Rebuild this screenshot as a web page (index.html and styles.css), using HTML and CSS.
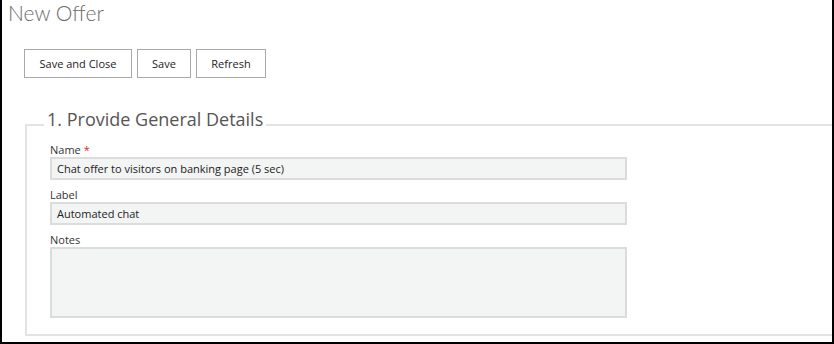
FILE: index.html
```html
<!DOCTYPE html>
<html lang="en">
<head>
    <meta charset="UTF-8">
    <title>New Offer</title>
    <link rel="stylesheet" href="styles.css">
</head>
<body>

<div class="page">
    <h1 class="page__title">New Offer</h1>

    <div class="toolbar">
        <button class="toolbar__btn toolbar__btn--wide">Save and Close</button>
        <button class="toolbar__btn toolbar__btn--small">Save</button>
        <button class="toolbar__btn">Refresh</button>
    </div>

    <fieldset class="section">
        <legend class="section__title">1. Provide General Details</legend>

        <div class="field">
            <label class="field__label">Name <span class="required">*</span></label>
            <div class="field__input">Chat offer to visitors on banking page (5 sec)</div>
        </div>
        <div class="field">
            <label class="field__label">Label</label>
            <div class="field__input">Automated chat</div>
        </div>
        <div class="field">
            <label class="field__label">Notes</label>
            <div class="field__input field__input--notes"></div>
        </div>
    </fieldset>
</div>

</body>
</html>
```

FILE: styles.css
```css
*{
    box-sizing: border-box;
    margin:0;
    padding:0;
}
body{
    font-family: "Open Sans", "Noto Sans", sans-serif;
    color:#333;
    background:#fff;
}
.page{
    width:834px;
    height:344px;
    border-left:2px solid #000;
    border-right:2px solid #000;
    border-bottom:2px solid #000;
    overflow:hidden;
}
.page__title{
    font-family: "Lato", "Open Sans", sans-serif;
    font-weight:300;
    font-size:21px;
    color:#6b6b6b;
    line-height:24px;
    padding:1px 0 0 6px;
}
.toolbar{
    display:flex;
    gap:5px;
    padding:24px 0 0 22px;
}
.toolbar__btn{
    font-family: inherit;
    font-size:11px;
    color:#222;
    background:#fff;
    border:1px solid #a9a9a9;
    height:29px;
    width:70px;
}
.toolbar__btn--wide{
    width:108px;
}
.toolbar__btn--small{
    width:54px;
}
.section{
    margin:30px -10px 0 23px;
    border:2px solid #e3e3e3;
    height:228px;
    padding:1px 0 0 23px;
}
.section__title{
    font-size:18px;
    color:#555;
    font-weight:400;
    padding:0 3px 12px 3px;
    margin-left:-6px;
    line-height:22px;
}
.field{
    margin-bottom:8px;
}
.field__label{
    display:block;
    font-size:11px;
    color:#333;
    line-height:14px;
}
.required{
    color:#e0262b;
}
.field__input{
    width:577px;
    height:23px;
    background:#f3f4f4;
    border:2px solid #dcdcdc;
    font-size:11px;
    color:#222;
    line-height:19px;
    padding-left:5px;
}
.field__input--notes{
    height:71px;
}
```
